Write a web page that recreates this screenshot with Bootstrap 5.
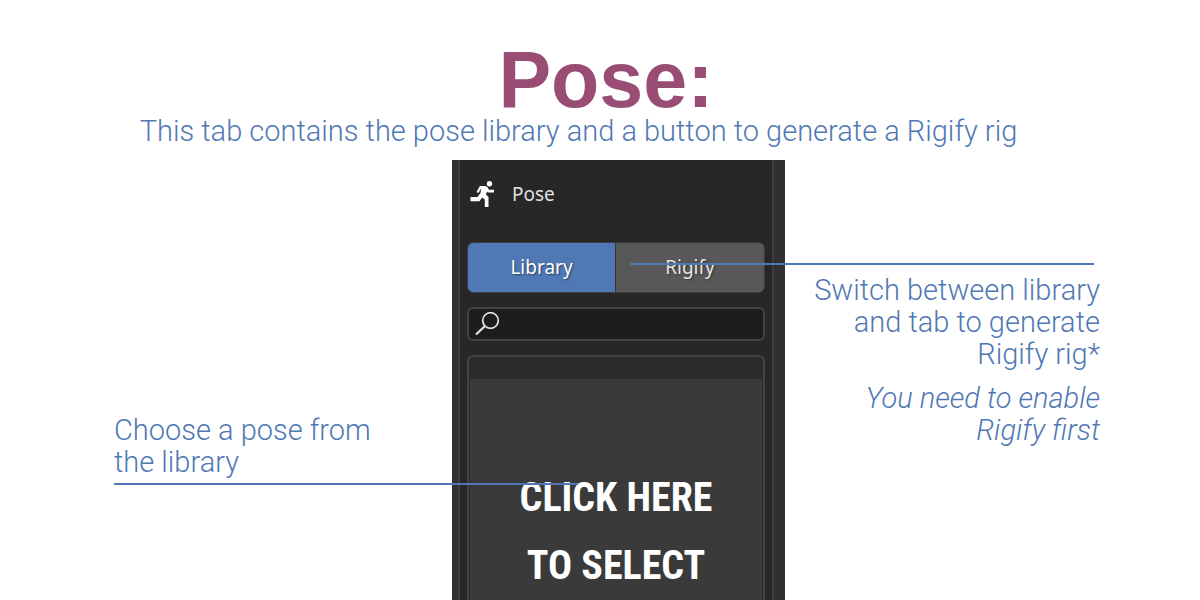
<!DOCTYPE html>
<html lang="en">
<head>
<meta charset="utf-8">
<meta name="viewport" content="width=device-width, initial-scale=1">
<title>Pose</title>
<link href="https://cdn.jsdelivr.net/npm/bootstrap@5.3.0/dist/css/bootstrap.min.css" rel="stylesheet">
<style>
  body { font-family: Roboto, "Liberation Sans", sans-serif; color: #5078b4; background: #fff; }
  .page-header { padding-top: 45px; }
  .page-title { font-family: "Liberation Sans", Arial, sans-serif; font-size: 79px; line-height: 70px; font-weight: 700; color: #994d75; padding-left: 12px; }
  .intro { font-size: 29px; line-height: 32px; font-weight: 300; padding-right: 43px; }
  .guide { display: grid; grid-template-columns: minmax(0, 452fr) 333px minmax(0, 415fr); margin-top: 13px; }
  .note { font-size: 29px; line-height: 32px; font-weight: 300; }
  .note-left { padding: 254px 64px 0 114px; }
  .note-right { padding: 114px 100px 0 12px; }
  .pointer { position: absolute; height: 2px; background: #5078b4; z-index: 2; }
  .pointer-left { top: 323px; left: 114px; right: -126px; }
  .pointer-right { top: 103px; left: -155px; right: 106px; }
  .panel { background: #303030; padding: 0 11px 0 6px; font-family: "Noto Sans", "DejaVu Sans", sans-serif; color: #e0e0e0; font-size: 19px; }
  .panel-body { background: #272727; border: solid #3d3d3d; border-width: 0 2px; padding: 16px 7px 0; }
  .panel-head { height: 36px; gap: 16px; padding-left: 3px; margin-bottom: 30px; }
  .tabs { border: 1px solid #3c3c3c; border-radius: 6px; overflow: hidden; height: 51px; }
  .tabs button { border: 0; background: #585858; color: #e6e6e6; text-shadow: 1px 1px 2px #0007; }
  .tabs button.active { background: #5078b4; color: #fff; border-right: 1px solid #333; }
  .search { height: 34px; border: 2px solid #434343; border-radius: 6px; background: #1d1d1d; margin-top: 14px; padding-left: 5px; }
  .search input { background: transparent; border: 0; outline: 0; color: #e6e6e6; width: 0; }
  .poses { border: 2px solid #434343; border-bottom: 0; border-radius: 6px 6px 0 0; background: #2b2b2b; margin-top: 14px; padding: 22px 1px 0; }
  .pose-pick { border: 0; background: #3a3a3a; color: #fff; font-family: "Roboto Condensed", "Liberation Sans Narrow", sans-serif; font-size: 40px; line-height: 68px; font-weight: 700; padding: 85px 0 0; }
</style>
</head>
<body class="vh-100 overflow-hidden d-flex flex-column">
<header class="page-header text-center">
  <h1 class="page-title m-0">Pose:</h1>
  <p class="intro m-0">This tab contains the pose library and a button to generate a Rigify rig</p>
</header>
<main class="guide flex-grow-1">
  <section class="note note-left position-relative">
    <p class="m-0">Choose a pose from<br>the library</p>
    <span class="pointer pointer-left"></span>
  </section>
  <section class="panel d-flex">
    <div class="panel-body d-flex flex-column flex-grow-1">
      <div class="panel-head d-flex align-items-center">
        <svg width="26" height="26" viewBox="0 0 26 26" fill="none" stroke="#fff" aria-hidden="true"><circle cx="19.500" cy="2.700" r="2.700" fill="#fff" stroke="none"/><path d="M7.500 11.500L10.500 6.200H15.500" stroke-width="2.200"/><path d="M15 6L18.500 10.200H24" stroke-width="2.800"/><path d="M11.500 5.200L18 6.500L16 13.500L18.500 16V26H14.800V18.500L12 16.500L9.500 20.200H0.500V16H7.500L10.500 12Z" fill="#fff" stroke="none"/></svg>
        <span>Pose</span>
      </div>
      <div class="tabs d-flex">
        <button type="button" class="active w-50">Library</button>
        <button type="button" class="w-50">Rigify</button>
      </div>
      <div class="search d-flex align-items-center">
        <svg width="26" height="26" viewBox="0 0 26 26" fill="none" stroke="#e6e6e6" aria-hidden="true"><circle cx="16.500" cy="9.500" r="7.800" stroke-width="1.700"/><path d="M11 15L2 23.500" stroke-width="2.200"/></svg>
        <input type="search" class="flex-grow-1" aria-label="Search poses">
      </div>
      <div class="poses d-flex flex-grow-1">
        <button type="button" class="pose-pick w-100 d-flex flex-column align-items-center"><span>CLICK HERE</span><span>TO SELECT</span></button>
      </div>
    </div>
  </section>
  <section class="note note-right position-relative text-end">
    <span class="pointer pointer-right"></span>
    <p class="mb-0">Switch between library<br>and tab to generate<br>Rigify rig*</p>
    <p class="fst-italic mb-0 mt-2 pt-1">You need to enable<br>Rigify first</p>
  </section>
</main>
<script src="https://cdn.jsdelivr.net/npm/bootstrap@5.3.0/dist/js/bootstrap.bundle.min.js"></script>
</body>
</html>
